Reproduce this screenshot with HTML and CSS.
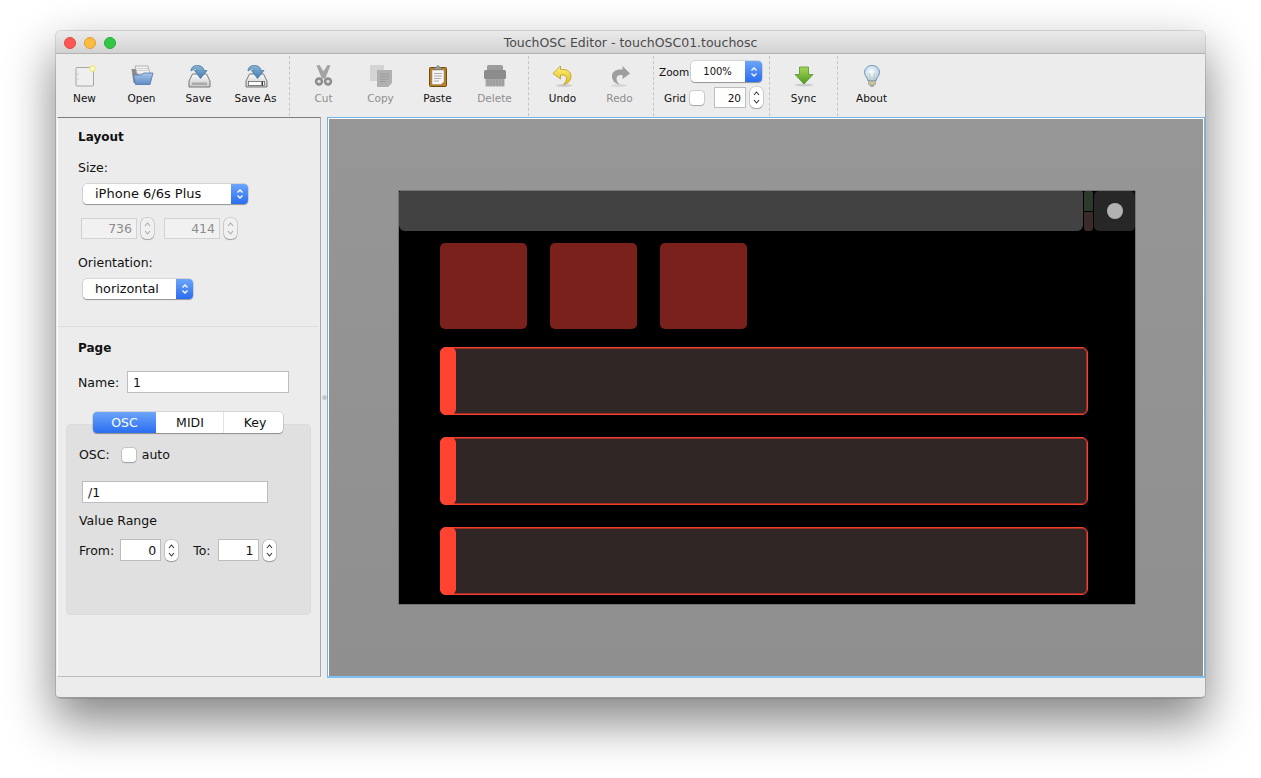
FILE: index.html
```html
<!DOCTYPE html>
<html lang="en">
<head>
  <meta charset="UTF-8" />
  <title>TouchOSC Editor - touchOSC01.touchosc</title>
  <link rel="stylesheet" href="styles.css">
</head>
<body>
  <svg class="defs" width="0" height="0">
    <defs>
      <linearGradient id="blueArrow" x1="0" y1="0" x2="0" y2="1"><stop offset="0" stop-color="#8db4d6"/><stop offset="1" stop-color="#3f7fb5"/></linearGradient>
      <linearGradient id="tray" x1="0" y1="0" x2="0" y2="1"><stop offset="0" stop-color="#fafafa"/><stop offset="1" stop-color="#c9c9c9"/></linearGradient>
      <linearGradient id="yellow" x1="0" y1="0" x2="0" y2="1"><stop offset="0" stop-color="#fff27a"/><stop offset="1" stop-color="#e0b820"/></linearGradient>
      <linearGradient id="green" x1="0" y1="0" x2="0" y2="1"><stop offset="0" stop-color="#a4d65a"/><stop offset="1" stop-color="#4f9a1e"/></linearGradient>
      <linearGradient id="folder" x1="0" y1="0" x2="0" y2="1"><stop offset="0" stop-color="#a9c6ec"/><stop offset="1" stop-color="#5f8cc8"/></linearGradient>
      <radialGradient id="bulb" cx="0.45" cy="0.4" r="0.6"><stop offset="0" stop-color="#ffffff"/><stop offset="1" stop-color="#a9c9e6"/></radialGradient>
    </defs>
  </svg>

  <div class="window">
    <div class="titlebar">
      <div class="lights"><i class="light red"></i><i class="light yellow"></i><i class="light green"></i></div>
      <div class="title">TouchOSC Editor - touchOSC01.touchosc</div>
    </div>

    <div class="toolbar">
      <div class="group">
        <div class="tool">
          <svg viewBox="0 0 24 24"><rect x="3" y="3.500" width="17.500" height="18.500" rx="1" fill="#efefef" stroke="#a5a5a5"/><circle cx="5" cy="10" r=".5" fill="#999"/><circle cx="5" cy="15" r=".5" fill="#999"/><circle cx="19.500" cy="4.500" r="3.200" fill="#f4e87a"/><circle cx="19.500" cy="4.500" r="1.700" fill="#fffdf0"/></svg>
          <span>New</span>
        </div>
        <div class="tool">
          <svg viewBox="0 0 24 24"><path d="M1.500 5h6l1 2v12H3.500z" fill="#8b8b8b"/><path d="M5 2h13l2 8H7z" fill="#f3f3f3" stroke="#999" stroke-width=".7"/><path d="M6.500 4.500h11.500M7 6.500h11.500" stroke="#bbb" stroke-width=".7"/><path d="M3.500 11h8l2-2h9.500l-3 11.500H5.500z" fill="url(#folder)" stroke="#4d74a8" stroke-width=".8"/></svg>
          <span>Open</span>
        </div>
        <div class="tool">
          <svg viewBox="0 0 24 24"><path d="M5.500 10L2 17v6h21v-6l-3.500-7z" fill="url(#tray)" stroke="#777"/><rect x="5" y="18.500" width="15" height="2.500" fill="#aaa"/><path d="M4 7c0-4 3-5.500 6.500-5.500 3.500 0 6 1.500 6.500 5h3l-6.500 8-6-8h3c-.5-1.500-2-2-3-1.500C6 5.500 5 6.500 4 7z" fill="url(#blueArrow)" stroke="#3c6e9c" stroke-width=".7"/></svg>
          <span>Save</span>
        </div>
        <div class="tool">
          <svg viewBox="0 0 24 24"><path d="M5.500 10L2 17v6h21v-6l-3.500-7z" fill="url(#tray)" stroke="#777"/><rect x="4.500" y="17.500" width="16" height="4" fill="#fff" stroke="#555" stroke-width=".7"/><rect x="17.500" y="17.500" width="1.500" height="4" fill="#333"/><path d="M4 7c0-4 3-5.500 6.500-5.500 3.500 0 6 1.500 6.500 5h3l-6.500 8-6-8h3c-.5-1.500-2-2-3-1.500C6 5.500 5 6.500 4 7z" fill="url(#blueArrow)" stroke="#3c6e9c" stroke-width=".7"/></svg>
          <span>Save As</span>
        </div>
      </div>

      <div class="group">
        <div class="tool off">
          <svg viewBox="0 0 24 24"><path d="M4.500 1.500L7.500 1l6 9.500-1.500 3.500-2 1z" fill="#a3a3a3"/><path d="M18.500 1.500L15.500 1l-6 9.500 1.500 3.500 2 1z" fill="#a3a3a3"/><circle cx="7" cy="17.500" r="3" fill="#dcdcdc" stroke="#8c8c8c" stroke-width="2.400"/><circle cx="16" cy="17.500" r="3" fill="#dcdcdc" stroke="#8c8c8c" stroke-width="2.400"/></svg>
          <span>Cut</span>
        </div>
        <div class="tool off">
          <svg viewBox="0 0 24 24"><rect x="1" y="1" width="14" height="16" fill="#d4d4d4"/><path d="M8 6h15v13l-4 4H8z" fill="#b0b0b0"/><path d="M11 10h9M11 12.500h9M11 15h9M11 17.500h6" stroke="#979797" stroke-width=".8"/></svg>
          <span>Copy</span>
        </div>
        <div class="tool">
          <svg viewBox="0 0 24 24"><rect x="3.500" y="3.500" width="17" height="19" rx="1" fill="#b9801f" stroke="#6d4c14"/><path d="M6 6h12v12L15 20.500H6z" fill="#f6f6f6" stroke="#888" stroke-width=".5"/><path d="M8 9.500h8M8 12h8M8 14.500h7M8 17h5" stroke="#9b9b9b" stroke-width=".8"/><path d="M8.500 5.500V3.500h2c0-2.500 3-2.500 3 0h2v2z" fill="#9c9c9c" stroke="#666" stroke-width=".5"/></svg>
          <span>Paste</span>
        </div>
        <div class="tool off">
          <svg viewBox="0 0 24 24"><path d="M4 2.500q0-1.500 1.500-1.500h13q1.500 0 1.500 1.500V7H4z" fill="#9c9c9c"/><rect x="1" y="6" width="22" height="9" rx="1.500" fill="#8c8c8c"/><rect x="2.500" y="15" width="19" height="7.500" fill="#aaaaaa"/><path d="M5 15.500v6M8 15.500v6M11 15.500v6M14 15.500v6M17 15.500v6M20 15.500v6" stroke="#909090" stroke-width=".9"/></svg>
          <span>Delete</span>
        </div>
      </div>

      <div class="group">
        <div class="tool">
          <svg viewBox="0 0 24 24"><ellipse cx="13" cy="21.500" rx="8" ry="1.500" fill="#ccc"/><path d="M9.500 2L2 9.500 9.500 15v-4c4-.5 6 1 6 3.500 0 2-1 4-3 6 5-1 7.500-4.500 7.500-8.500 0-4.500-4-7-10.500-6.500z" fill="url(#yellow)" stroke="#b89a1c" stroke-width=".8"/></svg>
          <span>Undo</span>
        </div>
        <div class="tool off">
          <svg viewBox="0 0 24 24"><ellipse cx="11" cy="21.500" rx="8" ry="1.500" fill="#d6d6d6"/><path d="M14.500 2L22 9.500 14.500 15v-4c-4-.5-6 1-6 3.500 0 2 1 4 3 6-5-1-7.500-4.500-7.500-8.500 0-4.500 4-7 10.500-6.500z" fill="#9e9e9e"/></svg>
          <span>Redo</span>
        </div>
      </div>

      <div class="group view-group">
        <div class="view-row">
          <label class="view-label">Zoom</label>
          <div class="select zoom-select">100%<b class="select-arrows"><svg viewBox="0 0 12 16"><path d="M3.500 6.500L6 4l2.500 2.500M3.500 9.500L6 12l2.500-2.500"/></svg></b></div>
        </div>
        <div class="view-row">
          <label class="view-label grid-label">Grid</label>
          <i class="check"></i>
          <div class="field grid-field">20</div>
          <div class="spinner"><svg viewBox="0 0 13 21"><path d="M4 8l2.500-3L9 8M4 13l2.500 3L9 13"/></svg></div>
        </div>
      </div>

      <div class="group">
        <div class="tool">
          <svg viewBox="0 0 24 24"><ellipse cx="12" cy="21" rx="9" ry="1.500" fill="#ccc"/><path d="M7.500 3h9v7.500H21L12 20 3 10.500h4.500z" fill="url(#green)" stroke="#4b8a1c" stroke-width=".7"/></svg>
          <span>Sync</span>
        </div>
      </div>

      <div class="group last">
        <div class="tool">
          <svg viewBox="0 0 24 24"><path d="M12 1.500c-4.500 0-7.500 3-7.500 7 0 3.500 3 5 3.500 8.500h8c.5-3.500 3.500-5 3.500-8.500 0-4-3-7-7.500-7z" fill="url(#bulb)" stroke="#6b8fae" stroke-width=".9"/><path d="M10 16.500L9.500 9M14 16.500l.5-7.500" stroke="#d8b866" stroke-width=".6" fill="none"/><rect x="8.500" y="17" width="7" height="4" rx="1" fill="#c9c39a" stroke="#888" stroke-width=".5"/><path d="M10 21.500h4v1h-4z" fill="#777"/></svg>
          <span>About</span>
        </div>
      </div>
    </div>

    <div class="main">
      <div class="panel">
        <h3 class="panel-title">Layout</h3>
        <div class="label size-label">Size:</div>
        <div class="select size-select">iPhone 6/6s Plus<b class="select-arrows"><svg viewBox="0 0 12 16"><path d="M3.500 6.500L6 4l2.500 2.500M3.500 9.500L6 12l2.500-2.500"/></svg></b></div>
        <div class="dims">
          <div class="field disabled dim">736</div>
          <div class="spinner disabled"><svg viewBox="0 0 13 21"><path d="M4 8l2.500-3L9 8M4 13l2.500 3L9 13"/></svg></div>
          <div class="field disabled dim dim-second">414</div>
          <div class="spinner disabled"><svg viewBox="0 0 13 21"><path d="M4 8l2.500-3L9 8M4 13l2.500 3L9 13"/></svg></div>
        </div>
        <div class="label orient-label">Orientation:</div>
        <div class="select orient-select">horizontal<b class="select-arrows"><svg viewBox="0 0 12 16"><path d="M3.500 6.500L6 4l2.500 2.500M3.500 9.500L6 12l2.500-2.500"/></svg></b></div>
        <hr class="divider">
        <h3 class="panel-title">Page</h3>
        <div class="name-row">
          <span class="label">Name:</span>
          <div class="field name-field">1</div>
        </div>

        <div class="tabs">
          <div class="tab active tab-osc">OSC</div>
          <div class="tab tab-midi">MIDI</div>
          <div class="tab tab-key">Key</div>
        </div>
        <div class="tab-box">
          <div class="osc-row">
            <span class="label">OSC:</span>
            <i class="check"></i>
            <span class="label">auto</span>
          </div>
          <div class="field path-field">/1</div>
          <div class="label range-label">Value Range</div>
          <div class="range-row">
            <span class="label">From:</span>
            <div class="field range-field">0</div>
            <div class="spinner"><svg viewBox="0 0 13 21"><path d="M4 8l2.500-3L9 8M4 13l2.500 3L9 13"/></svg></div>
            <span class="label to-label">To:</span>
            <div class="field range-field">1</div>
            <div class="spinner"><svg viewBox="0 0 13 21"><path d="M4 8l2.500-3L9 8M4 13l2.500 3L9 13"/></svg></div>
          </div>
        </div>
      </div>

      <div class="splitter"><i></i></div>

      <div class="canvas">
        <div class="device">
          <div class="device-top">
            <div class="device-bar"></div>
            <div class="device-leds"><i class="led-on"></i><i class="led-off"></i></div>
            <div class="device-btn"><i></i></div>
          </div>
          <div class="pads">
            <div class="pad"></div>
            <div class="pad"></div>
            <div class="pad"></div>
          </div>
          <div class="fader"><i></i></div>
          <div class="fader"><i></i></div>
          <div class="fader"><i></i></div>
        </div>
      </div>
    </div>
    <div class="statusbar"></div>
  </div>
</body>
</html>
```

FILE: styles.css
```css
* { box-sizing: border-box; margin:0; padding:0; }
html, body { height:100%; overflow:hidden; }
body {
  font-family: 'DejaVu Sans', 'Liberation Sans', sans-serif;
  background:#fff; color:#111;
  padding:31px 56px 0;
}
.defs { position:absolute; }

.window {
  width:1149px; height:667px;
  background:#ececec;
  border-radius:5px 5px 4px 4px;
  box-shadow:0 0 0 1px rgba(0,0,0,0.12), 0 22px 48px 2px rgba(0,0,0,0.48);
  display:flex; flex-direction:column;
}

/* title */
.titlebar {
  height:23px; flex:none;
  display:flex; align-items:center; justify-content:center;
  padding-top:1px;
  background:linear-gradient(#ebebeb, #d2d2d2);
  border-bottom:1px solid #b1b1b1;
  border-radius:5px 5px 0 0;
  position:relative;
}
.lights { position:absolute; left:8px; top:6px; display:flex; gap:8px; }
.light { width:12px; height:12px; border-radius:50%; display:block; }
.light.red { background:#fc5753; border:1px solid #df4744; }
.light.yellow { background:#fdbc40; border:1px solid #de9f34; }
.light.green { background:#33c748; border:1px solid #27aa35; }
.title { font-size:12.500px; color:#4a4a4a; }

/* toolbar */
.toolbar {
  height:63px; flex:none;
  display:flex;
  background:#ececec;
}
.group {
  display:flex;
  padding:2px 5px 0;
  margin:2px 0 1px;
  border-right:1px dashed #c4c4c4;
}
.group:first-child { padding-left:0; width:234px; }
.group.last { border-right:none; }
.tool {
  width:57px;
  display:flex; flex-direction:column; align-items:center;
  font-size:10.500px; color:#111;
}
.tool svg { width:24px; height:24px; margin-top:6px; display:block; }
.tool span { margin-top:3px; line-height:14px; white-space:nowrap; }
.tool.off span { color:#8e8e8e; }

.view-group {
  width:116px; flex-direction:column;
  padding:5px 0 0 5px;
  gap:5px;
}
.view-row { display:flex; align-items:center; height:21px; }
.view-label { font-size:10.500px; }
.grid-label { margin-left:5px; margin-right:4px; }

/* controls */
.select {
  height:20px;
  background:#fff;
  border-radius:4px;
  box-shadow:0 0 0 0.5px rgba(0,0,0,0.2), 0 1px 1px rgba(0,0,0,0.3);
  display:flex; align-items:center;
  font-size:12px; color:#111;
  padding-left:12px;
  padding-bottom:1px;
  position:relative;
  white-space:nowrap;
}
.select-arrows {
  position:absolute; right:0; top:0; bottom:0; width:17px;
  background:linear-gradient(#6ca5f9, #2a6df0);
  border-radius:0 4px 4px 0;
  display:flex; align-items:center; justify-content:center;
}
.select-arrows svg { width:12px; height:16px; }
.select-arrows path { fill:none; stroke:#fff; stroke-width:1.300; }

.field {
  background:#fff;
  border:1px solid #bdbdbd;
  font-size:12.500px; color:#111;
  display:flex; align-items:center; justify-content:flex-end;
  padding:0 4px;
}
.field.disabled { color:#8c8c8c; background:#f1f1f1; border-color:#d2d2d2; }

.spinner {
  width:13px; height:21px; flex:none;
  background:#fff;
  border-radius:5px;
  box-shadow:0 0 0 0.5px rgba(0,0,0,0.25), 0 1px 1px rgba(0,0,0,0.2);
}
.spinner svg { display:block; width:13px; height:21px; }
.spinner path { fill:none; stroke:#333; stroke-width:1.100; }
.spinner.disabled { background:#f0f0f0; }
.spinner.disabled path { stroke:#aaa; }

.check {
  display:block; width:14px; height:14px;
  background:#fff; border-radius:3px;
  box-shadow:0 0 0 0.5px rgba(0,0,0,0.25), 0 1px 1px rgba(0,0,0,0.2);
}

.view-row .zoom-select { width:71px; height:21px; margin-left:2px; font-size:10px; padding-left:12px; }
.view-row .grid-field { width:32px; height:21px; margin-left:10px; font-size:10.500px; }
.view-row .spinner { margin-left:4px; }

/* left panel */
.main { flex:1; display:flex; min-height:0; padding-left:1px; }
.panel {
  width:264px; flex:none;
  margin-bottom:1px;
  background:#ececec;
  border:1px solid #fbfbfb;
  border-top:1px solid #7d7d7d;
  border-right:1px solid #a9a9a9;
  border-bottom:1px solid #bdbdbd;
  padding-top:12px;
  font-size:12.500px;
}
.panel-title { font-size:12px; font-weight:bold; margin-left:20px; line-height:15px; }
.label { color:#111; font-size:12.500px; line-height:15px; white-space:nowrap; }
.size-label { margin:15px 0 0 20px; }
.panel .size-select { width:165px; margin:9px 0 0 25px; font-size:13px; }
.dims { display:flex; margin:14px 0 0 23px; }
.dim { width:56px; height:21px; }
.dims .spinner { margin-left:4px; }
.dim-second { margin-left:10px; }
.orient-label { margin:16px 0 0 20px; }
.panel .orient-select { width:110px; margin:9px 0 0 25px; font-size:12.800px; }
.divider { border:none; border-top:1px solid #dcdcdc; margin:27px 2px 14px 0; }
.name-row { display:flex; align-items:center; margin:15px 0 0 20px; }
.name-field { width:162px; height:22px; margin-left:8px; justify-content:flex-start; padding-left:5px; }

.tabs {
  display:flex; width:190px; height:21px;
  margin:19px 0 0 35px;
  background:#fff; border-radius:4px;
  box-shadow:0 0 0 0.5px rgba(0,0,0,0.2), 0 1px 1px rgba(0,0,0,0.3);
  position:relative; z-index:1;
  font-size:12.500px;
}
.tab { display:flex; align-items:center; justify-content:center; border-right:1px solid #e2e2e2; }
.tab-osc { width:63px; }
.tab-midi { width:68px; padding-left:1px; }
.tab-key { width:59px; border-right:none; padding-left:3px; }
.tab.active {
  background:linear-gradient(#6ca5f9, #2a6df0);
  color:#fff; border-right:none;
  border-radius:4px 0 0 4px;
}
.tab-box {
  width:245px; height:191px;
  margin:-9px 0 0 8px;
  background:#e0e0e0;
  border:1px solid #dcdcdc;
  border-radius:4px;
  padding-top:22px;
}
.osc-row { display:flex; align-items:center; margin-left:12px; height:15px; }
.osc-row .check { margin:0 6px 0 12px; }
.path-field { width:186px; height:22px; margin:19px 0 0 15px; justify-content:flex-start; padding-left:5px; }
.range-label { margin:10px 0 0 12px; }
.range-row { display:flex; align-items:center; margin:11px 0 0 12px; }
.range-row .spinner { margin-left:4px; }
.range-field { width:41px; height:22px; margin-left:6px; }
.to-label { margin-left:15px; }
.to-label + .range-field { margin-left:7px; }

/* splitter */
.splitter {
  width:6px; flex:none;
  display:flex; align-items:center; justify-content:center;
  background:#ececec;
}
.splitter i { width:7px; height:7px; flex:none; border-radius:50%; background:#c6c6c6; border:1px solid #f6f6f6; display:block; }

/* canvas */
.canvas {
  flex:none; width:878px;
  border:1px solid #6fb4ef;
  border-bottom:2px solid #7fc0f5;
  background:linear-gradient(#969696, #8f8f8f);
  display:flex; align-items:center; justify-content:center;
  padding:1px 0 0 2px;
  box-shadow:inset 1px 1px 0 #fff, inset -1px 0 0 #fff;
}
.device {
  width:736px; height:413px; flex:none;
  background:#000;
  box-shadow:0 0 0 0.5px #555;
}
.device-top { display:flex; height:40px; }
.device-bar { width:684px; background:#424242; border-radius:2px 2px 6px 6px; }
.device-leds { width:9px; margin:0 1px 0 1px; display:flex; flex-direction:column; gap:1px; }
.device-leds i { display:block; flex:1; }
.led-on { background:#2b3a2b; border-radius:2px 2px 0 0; }
.led-off { background:#3a2a2a; border-radius:0 0 3px 3px; }
.device-btn {
  flex:1; background:#272727; border-radius:5px;
  display:flex; align-items:center; justify-content:center;
}
.device-btn i { display:block; width:16px; height:16px; border-radius:50%; background:#b2b2b2; }
.pads { display:flex; gap:23px; margin:12px 0 0 41px; }
.pad { width:87px; height:86px; background:#7a211b; border-radius:5px; }
.fader {
  width:648px; height:68px;
  margin:22px 0 0 41px;
  background:#2f2625;
  border:1px solid #f2402f;
  box-shadow:inset 0 0 0 1px rgba(190,50,38,0.8);
  border-radius:6px;
  position:relative;
}
.pads + .fader { margin-top:18px; }
.fader i {
  position:absolute; left:-1px; top:-1px; bottom:-1px;
  width:16px; background:#ff4330; border-radius:6px;
  display:block;
}

.statusbar {
  height:20px; flex:none;
  background:#ececec;
  border-bottom:1px solid #9a9a9a;
  border-radius:0 0 4px 4px;
}
```
